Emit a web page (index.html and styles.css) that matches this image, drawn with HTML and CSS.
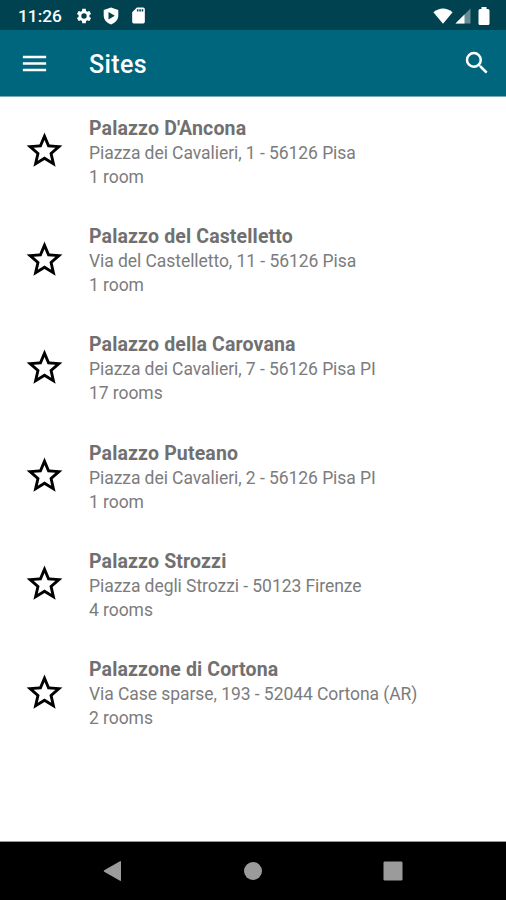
FILE: index.html
```html
<!DOCTYPE html>
<html lang="en">
<head>
<meta charset="utf-8">
<title>Sites</title>
<link rel="stylesheet" href="styles.css">
</head>
<body>
<div class="screen">
  <div class="status">
    <span class="clock">11:26</span>
    <svg class="gear" viewBox="0 0 24 24"><path d="M19.14 12.94c.04-.3.06-.61.06-.94s-.02-.64-.07-.94l2.03-1.58a.49.49 0 0 0 .12-.61l-1.92-3.32a.49.49 0 0 0-.59-.22l-2.39.96a7 7 0 0 0-1.62-.94l-.36-2.54a.48.48 0 0 0-.48-.41h-3.84a.47.47 0 0 0-.47.41l-.36 2.54c-.59.24-1.13.57-1.62.94l-2.39-.96a.48.48 0 0 0-.59.22L2.74 8.87a.47.47 0 0 0 .12.61l2.03 1.58a6 6 0 0 0 0 1.88l-2.03 1.58a.49.49 0 0 0-.12.61l1.92 3.32c.12.22.37.29.59.22l2.39-.96c.5.38 1.03.7 1.62.94l.36 2.54c.05.24.24.41.48.41h3.84c.24 0 .44-.17.47-.41l.36-2.54a7 7 0 0 0 1.62-.94l2.39.96c.22.08.47 0 .59-.22l1.92-3.32a.47.47 0 0 0-.12-.61zM12 15.6a3.6 3.6 0 1 1 0-7.2 3.6 3.6 0 0 1 0 7.2z"/></svg>
    <svg class="shield" viewBox="0 0 16 18"><path fill-rule="evenodd" d="M8 .5 15.300 3v5.500c0 4.200-3 7.200-7.300 9C3.700 15.700.7 12.700.7 8.500V3zM5.500 5v7.400l6.300-3.700z"/></svg>
    <svg class="card" viewBox="0 0 24 24"><path d="M18 2h-8L4 8v12a2 2 0 0 0 2 2h12a2 2 0 0 0 2-2V4a2 2 0 0 0-2-2zm-6 5h-2V4h2zm3 0h-2V4h2zm3 0h-2V4h2z"/></svg>
    <span class="space"></span>
    <svg class="wifi" viewBox="0 0 20 16"><path d="M.4 4.200Q10-3.300 19.600 4.200L10 15.700z"/></svg>
    <svg class="signal" viewBox="0 0 16 16"><path opacity=".4" d="M15.500.5v15H.5z"/><path d="M9.500 6.500v9H.5z"/></svg>
    <svg class="battery" viewBox="0 0 12 18"><path d="M3.500 0h5v2H10q1.500 0 1.500 1.500v13Q11.500 18 10 18H2Q.5 18 .5 16.500v-13Q.5 2 2 2h1.500z"/></svg>
  </div>
  <header class="bar">
    <svg class="menu" viewBox="0 0 24 24"><path d="M3 18h18v-2H3zm0-5h18v-2H3zm0-7v2h18V6z"/></svg>
    <h1>Sites</h1>
    <svg class="search" viewBox="0 0 24 24"><path d="M15.500 14h-.79l-.28-.27A6.470 6.470 0 0 0 16 9.500 6.500 6.500 0 1 0 9.500 16c1.610 0 3.090-.59 4.230-1.570l.27.28v.79l5 4.990L20.490 19zm-6 0a4.500 4.500 0 1 1 0-9 4.500 4.500 0 0 1 0 9z"/></svg>
  </header>
  <main class="list">
    <div class="row"><svg class="star" viewBox="0 0 24 24"><use href="#star"/></svg><div class="info"><h2>Palazzo D'Ancona</h2><p>Piazza dei Cavalieri, 1 - 56126 Pisa</p><p>1 room</p></div></div>
    <div class="row"><svg class="star" viewBox="0 0 24 24"><use href="#star"/></svg><div class="info"><h2>Palazzo del Castelletto</h2><p>Via del Castelletto, 11 - 56126 Pisa</p><p>1 room</p></div></div>
    <div class="row"><svg class="star" viewBox="0 0 24 24"><use href="#star"/></svg><div class="info"><h2>Palazzo della Carovana</h2><p>Piazza dei Cavalieri, 7 - 56126 Pisa PI</p><p>17 rooms</p></div></div>
    <div class="row"><svg class="star" viewBox="0 0 24 24"><use href="#star"/></svg><div class="info"><h2>Palazzo Puteano</h2><p>Piazza dei Cavalieri, 2 - 56126 Pisa PI</p><p>1 room</p></div></div>
    <div class="row"><svg class="star" viewBox="0 0 24 24"><use href="#star"/></svg><div class="info"><h2>Palazzo Strozzi</h2><p>Piazza degli Strozzi - 50123 Firenze</p><p>4 rooms</p></div></div>
    <div class="row"><svg class="star" viewBox="0 0 24 24"><use href="#star"/></svg><div class="info"><h2>Palazzone di Cortona</h2><p>Via Case sparse, 193 - 52044 Cortona (AR)</p><p>2 rooms</p></div></div>
  </main>
  <nav class="nav">
    <svg viewBox="0 0 20 22"><path d="M1.200 10.200 17 1.200q1-.5 1 .5v18.600q0 1-1 .5L1.200 11.800q-1-.8 0-1.600z"/></svg>
    <svg viewBox="0 0 20 22"><circle cx="10" cy="11" r="9"/></svg>
    <svg viewBox="0 0 20 22"><rect x=".5" y="1.500" width="19" height="19" rx="1.300"/></svg>
  </nav>
</div>
<svg class="defs"><defs><path id="star" d="m22 9.240-7.190-.62L12 2 9.190 8.630 2 9.240l5.460 4.730L5.820 21 12 17.270 18.180 21l-1.630-7.030zM12 15.400l-3.760 2.270 1-4.280-3.320-2.880 4.380-.38L12 6.100l1.710 4.040 4.380.38-3.320 2.880 1 4.280z"/></defs></svg>
</body>
</html>
```
FILE: styles.css
```css
body {
  margin: 0;
  background: #fff;
  font-family: Roboto, "Liberation Sans", sans-serif;
}

h1, h2, p {
  margin: 0;
  white-space: nowrap;
}

svg {
  display: block;
  flex: none;
}

.defs {
  position: absolute;
  width: 0;
  height: 0;
}

.screen {
  display: flex;
  flex-direction: column;
  height: 900px;
  overflow: hidden;
}

.status {
  display: flex;
  align-items: center;
  flex: none;
  box-sizing: border-box;
  height: 30px;
  padding: 1px 16px 0 18px;
  background: #00424f;
  color: #fff;
  fill: #fff;
}

.clock {
  width: 57px;
  font-size: 17.300px;
  font-weight: 500;
  line-height: 30px;
}

.gear { width: 18px; height: 18px; }
.shield { width: 16px; height: 18px; margin-left: 10px; }
.card { width: 19px; height: 19px; margin-left: 10px; }
.space { flex: 1; }
.wifi { width: 20px; height: 16px; }
.signal { width: 16px; height: 16px; margin-left: 2px; }
.battery { width: 12px; height: 18px; margin-left: 7px; }

.bar {
  display: flex;
  align-items: center;
  flex: none;
  box-sizing: border-box;
  height: 66px;
  padding: 0 14px 0 19px;
  background: #00667e;
  color: #fff;
  fill: #fff;
  box-shadow: 0 1px 0 #7fabb6;
}

.menu { width: 31px; height: 31px; }
.search { width: 30px; height: 30px; }

h1 {
  flex: 1;
  margin-left: 39px;
  font-size: 25px;
  font-weight: 500;
  letter-spacing: 0.4px;
  line-height: 36px;
  padding-top: 3px;
}

.list {
  flex: 1;
  padding-top: 19.8px;
}

.row {
  display: flex;
  height: 108.3px;
}

.star {
  width: 43px;
  height: 43px;
  margin: 13.500px 23px 0;
}

.info { color: #7c7c7c; }

h2 {
  color: #707070;
  font-size: 19.500px;
  font-weight: 700;
  letter-spacing: 0.14px;
  line-height: 25px;
}

p {
  font-size: 17.500px;
  letter-spacing: -0.06px;
  line-height: 24px;
}

.nav {
  display: flex;
  justify-content: space-between;
  align-items: center;
  flex: none;
  box-sizing: border-box;
  height: 58px;
  padding: 0 103px 0 103px;
  background: #000;
  fill: #9b9b9b;
  box-shadow: 0 -1px 0 #999;
}

.nav svg { width: 20px; height: 22px; }
```
